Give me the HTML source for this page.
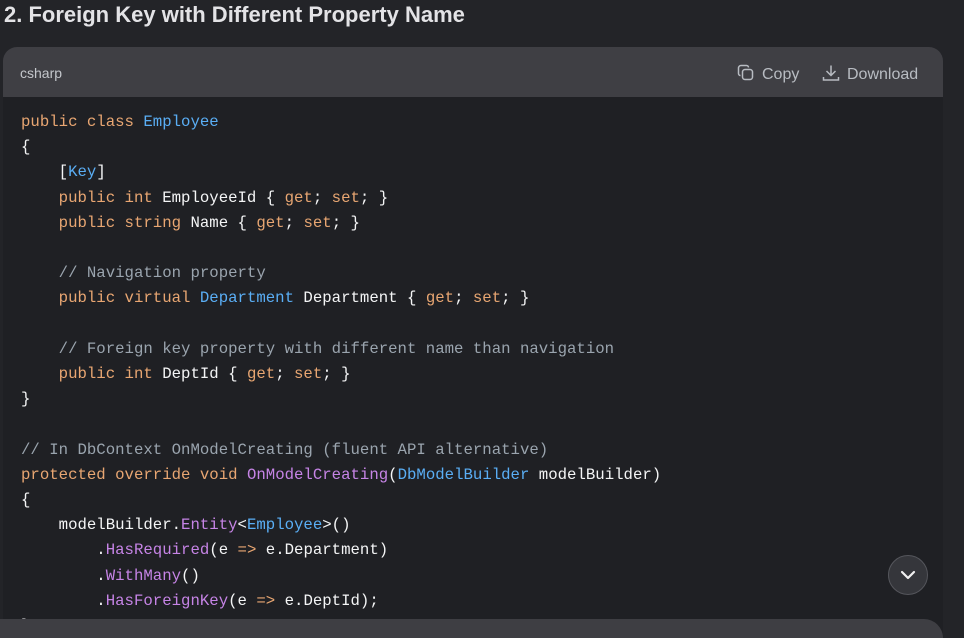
<!DOCTYPE html>
<html><head><meta charset="utf-8"><style>
html,body{margin:0;padding:0;width:964px;height:638px;overflow:hidden;background:#232428;}
h2{position:absolute;left:4px;top:0;margin:0;font:bold 22px "Liberation Sans",sans-serif;color:#e3e3e6;line-height:30px;}
.card{position:absolute;left:3px;top:47px;width:940px;height:591px;border-radius:14px 14px 0 0;overflow:hidden;background:#1f2024;}
.hd{height:50px;background:#3f3f44;position:relative;font:14px "Liberation Sans",sans-serif;color:#c4c7cc;}
.hd .lang{position:absolute;left:17px;top:18px;}
.hd .btn{position:absolute;top:17px;color:#b8bcc2;font-size:16px;}
pre{margin:0;position:absolute;left:18px;top:63px;font:15.7px/25.2px "Liberation Mono",monospace;color:#f4f5f6;}
.k{color:#e8a672}.t{color:#5aaef5}.c{color:#9aa4ae}.m{color:#c684e6}
.bottom{position:absolute;left:0;top:619px;width:943px;height:19px;background:#3e3e43;border-radius:0 22px 0 0;}
.down{position:absolute;left:888px;top:555px;width:38px;height:38px;border-radius:50%;background:#35363b;border:1px solid #55565c;}
</style></head><body>
<h2>2. Foreign Key with Different Property Name</h2>
<div class="card">
<div class="hd"><span class="lang">csharp</span>
<span class="btn" style="left:734px"><svg width="18" height="18" viewBox="0 0 18 18" style="vertical-align:-3px;margin-right:7px" fill="none" stroke="#b8bcc2" stroke-width="1.5"><rect x="5.5" y="5.5" width="10" height="10" rx="2.5"/><path d="M3.5 11.5 A2 2 0 0 1 1.5 9.5 V4 A2.5 2.5 0 0 1 4 1.5 H9.5 A2 2 0 0 1 11.5 3.5"/></svg>Copy</span>
<span class="btn" style="left:819px"><svg width="18" height="18" viewBox="0 0 18 18" style="vertical-align:-3px;margin-right:7px" fill="none" stroke="#b8bcc2" stroke-width="1.5"><path d="M9 1.5V11M4.5 7l4.5 4.5 4.5-4.5M1.5 13v3h15v-3"/></svg>Download</span></div>
<pre><span class="k">public class</span> <span class="t">Employee</span>
{
    [<span class="t">Key</span>]
    <span class="k">public int</span> EmployeeId { <span class="k">get</span>; <span class="k">set</span>; }
    <span class="k">public string</span> Name { <span class="k">get</span>; <span class="k">set</span>; }

    <span class="c">// Navigation property</span>
    <span class="k">public virtual</span> <span class="t">Department</span> Department { <span class="k">get</span>; <span class="k">set</span>; }

    <span class="c">// Foreign key property with different name than navigation</span>
    <span class="k">public int</span> DeptId { <span class="k">get</span>; <span class="k">set</span>; }
}

<span class="c">// In DbContext OnModelCreating (fluent API alternative)</span>
<span class="k">protected override void</span> <span class="m">OnModelCreating</span>(<span class="t">DbModelBuilder</span> modelBuilder)
{
    modelBuilder.<span class="m">Entity</span>&lt;<span class="t">Employee</span>&gt;()
        .<span class="m">HasRequired</span>(e <span class="k">=&gt;</span> e.Department)
        .<span class="m">WithMany</span>()
        .<span class="m">HasForeignKey</span>(e <span class="k">=&gt;</span> e.DeptId);
}</pre>
</div>
<div class="down"><svg width="38" height="38" viewBox="0 0 38 38" fill="none" stroke="#f0f0f0" stroke-width="2.2" stroke-linecap="round" stroke-linejoin="round"><path d="M13 16l6 6 6-6"/></svg></div>
<div class="bottom"></div>
</body></html>
